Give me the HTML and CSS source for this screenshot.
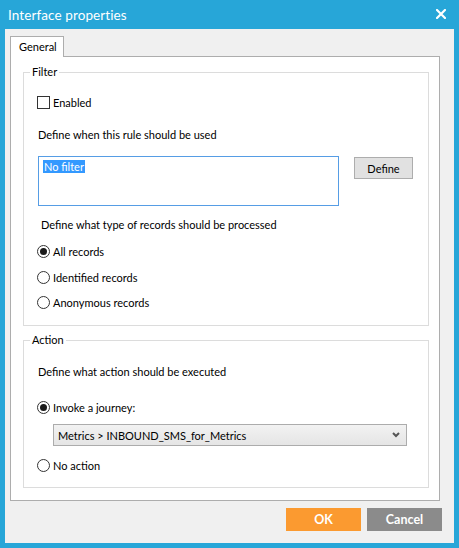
FILE: index.html
```html
<!DOCTYPE html>
<html>
<head>
<meta charset="utf-8">
<link rel="stylesheet" href="styles.css">
</head>
<body>
<div class="window">
  <div class="titlebar">
    <span class="title">Interface properties</span>
    <svg class="close" width="10" height="10" viewBox="0 0 10 10"><path d="M1 1 L9 9 M9 1 L1 9" stroke="#fff" stroke-width="2.2" stroke-linecap="square"/></svg>
  </div>
  <div class="client">
    <div class="tabs"><div class="tab">General</div></div>
    <div class="panel">
      <div class="group filter">
        <span class="group-title">Filter</span>
        <div class="row r-enabled"><span class="checkbox"></span><span>Enabled</span></div>
        <div class="row r-when">Define when this rule should be used</div>
        <div class="filter-row">
          <div class="textarea"><span class="sel">No filter</span></div>
          <div class="btn define">Define</div>
        </div>
        <div class="row r-type">Define what type of records should be processed</div>
        <div class="row r-all"><span class="radio on"></span><span>All records</span></div>
        <div class="row r-ident"><span class="radio"></span><span>Identified records</span></div>
        <div class="row r-anon"><span class="radio"></span><span>Anonymous records</span></div>
      </div>
      <div class="group action">
        <span class="group-title">Action</span>
        <div class="row r-what">Define what action should be executed</div>
        <div class="row r-invoke"><span class="radio on"></span><span>Invoke a journey:</span></div>
        <div class="select">
          <span>Metrics &gt; INBOUND_SMS_for_Metrics</span>
          <svg width="8" height="6" viewBox="0 0 8 6"><path d="M1 1 L4 4 L7 1" fill="none" stroke="#555" stroke-width="2"/></svg>
        </div>
        <div class="row r-none"><span class="radio"></span><span>No action</span></div>
      </div>
    </div>
    <div class="footer">
      <div class="fbtn ok">OK</div>
      <div class="fbtn cancel">Cancel</div>
    </div>
  </div>
</div>
</body>
</html>
```

FILE: styles.css
```css
html, body {
  margin: 0;
  padding: 0;
  background: #27a6d8;
}
body {
  font-family: Lato, "Open Sans", sans-serif;
  font-size: 11px;
  color: #000;
}
.window {
  width: 459px;
  height: 548px;
  box-sizing: border-box;
  background: #27a6d8;
  padding: 0 5px 5px 5px;
}
.titlebar {
  height: 29px;
  display: flex;
  align-items: center;
  justify-content: space-between;
  padding: 0 8px 0 3px;
}
.title {
  color: #fff;
  font-size: 13.5px;
  letter-spacing: 0.1px;
}
.close {
  display: block;
  margin-top: -1px;
}
.client {
  height: 514px;
  box-sizing: border-box;
  background: #f0f0f0;
  padding: 7px 14px 0 5px;
}
.tabs {
  display: flex;
  height: 20px;
}
.tab {
  position: relative;
  z-index: 1;
  width: 54px;
  height: 21px;
  box-sizing: border-box;
  border: 1px solid #adadad;
  border-bottom: none;
  background: #fff;
  padding-left: 8px;
  line-height: 19px;
}
.panel {
  height: 445px;
  box-sizing: border-box;
  border: 1px solid #adadad;
  background: #fff;
  padding: 15px 10px 0 12px;
}
.group {
  position: relative;
  border: 1px solid #dcdcdc;
  box-sizing: border-box;
  padding-left: 13px;
}
.group.filter {
  height: 254px;
  padding-top: 21px;
}
.group.action {
  height: 148px;
  margin-top: 14px;
  padding-top: 22px;
}
.group-title {
  position: absolute;
  top: -9px;
  left: 6px;
  padding: 0 2px;
  background: #fff;
  line-height: 16px;
}
.row {
  height: 16px;
  display: flex;
  align-items: center;
  gap: 3px;
  white-space: nowrap;
}
.r-when { margin-top: 16px; padding-left: 1px; }
.r-type { margin-top: 10px; padding-left: 4px; }
.r-all { margin-top: 11px; }
.r-ident { margin-top: 10px; }
.r-anon { margin-top: 9px; }
.r-invoke { margin-top: 20px; }
.r-what { padding-left: 1px; }
.r-none { margin-top: 11px; }
.checkbox {
  width: 13px;
  height: 13px;
  box-sizing: border-box;
  border: 1px solid #333;
  background: #fff;
}
.radio {
  width: 13px;
  height: 13px;
  box-sizing: border-box;
  border: 1px solid #333;
  border-radius: 50%;
  background: #fff;
  display: flex;
  align-items: center;
  justify-content: center;
}
.radio.on::after {
  content: "";
  width: 7px;
  height: 7px;
  border-radius: 50%;
  background: #1a1a1a;
}
.filter-row {
  display: flex;
  align-items: flex-start;
  margin-top: 14px;
  padding-left: 1px;
}
.textarea {
  width: 301px;
  height: 50px;
  box-sizing: border-box;
  border: 1px solid #569de5;
  padding: 3px 0 0 4px;
  line-height: 13px;
}
.sel {
  background: #3399ff;
  color: #fff;
  padding: 0 1px;
}
.btn.define {
  margin-left: 15px;
  margin-top: 1px;
  width: 59px;
  height: 22px;
  box-sizing: border-box;
  border: 1px solid #adadad;
  background: #e1e1e1;
  display: flex;
  align-items: center;
  justify-content: center;
}
.select {
  margin: 9px 0 0 16px;
  width: 354px;
  height: 22px;
  box-sizing: border-box;
  border: 1px solid #acacac;
  background: linear-gradient(#f2f2f2, #e5e5e5);
  display: flex;
  align-items: center;
  justify-content: space-between;
  padding: 0 6px 0 4px;
  white-space: nowrap;
}
.select svg { display: block; }
.footer {
  display: flex;
  justify-content: flex-end;
  gap: 6px;
  margin-top: 7px;
  margin-right: -2px;
}
.fbtn {
  width: 75px;
  height: 23px;
  display: flex;
  align-items: center;
  justify-content: center;
  color: #fff;
  font-weight: bold;
  font-size: 12.5px;
}
.ok { background: #fb9a30; }
.cancel { background: #8b8b8b; }
```
